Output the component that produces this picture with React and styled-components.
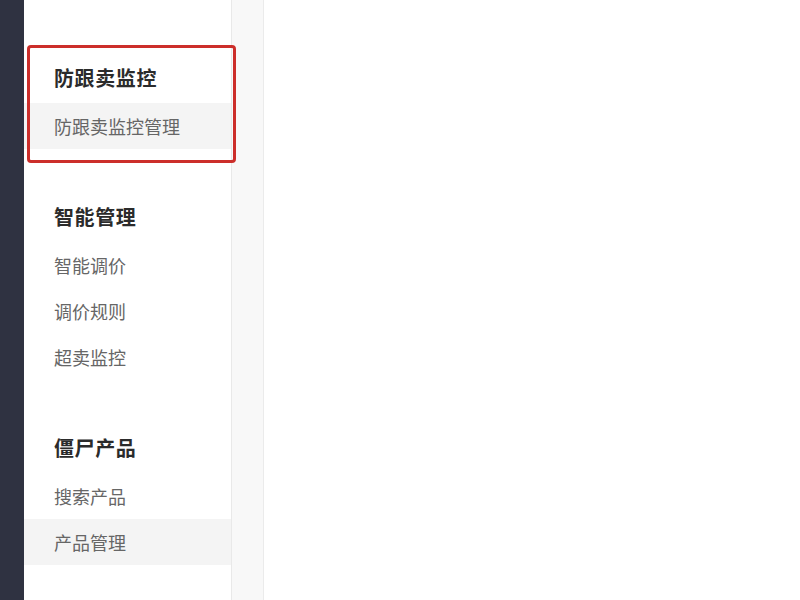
import React from 'react';
import styled, { createGlobalStyle } from 'styled-components';

const groups = [
    { title: '防跟卖监控', items: [{ text: '防跟卖监控管理', active: true }], marked: true },
    { title: '智能管理', items: [{ text: '智能调价' }, { text: '调价规则' }, { text: '超卖监控' }] },
    { title: '僵尸产品', items: [{ text: '搜索产品' }, { text: '产品管理', active: true }] },
];

export default function App() {
    return (
        <Page>
            <GlobalStyle />
            <Rail />
            <Sidebar>
                <PeekItem>跟卖商品</PeekItem>
                {groups.map(g => (
                    <Group key={g.title}>
                        <Title>{g.title}</Title>
                        {g.items.map(it => (
                            <Item key={it.text} active={it.active}>{it.text}</Item>
                        ))}
                        {g.marked && <Mark />}
                    </Group>
                ))}
            </Sidebar>
            <Gutter />
            <Main />
        </Page>
    );
}

const GlobalStyle = createGlobalStyle`
    html, body {
        margin: 0;
        padding: 0;
        background: #fff;
    }
    body {
        font-family: "Noto Sans CJK SC", "Noto Sans", sans-serif;
    }
`;

const Page = styled.div`
    display: flex;
    width: 800px;
    height: 600px;
    overflow: hidden;
`;

const Rail = styled.div`
    width: 24px;
    flex-shrink: 0;
    background-color: #2f3241;
`;

const Sidebar = styled.div`
    width: 207px;
    flex-shrink: 0;
    background-color: #fff;
    border-right: 1px solid #e9e9e9;
    display: flex;
    flex-direction: column;
`;

const Group = styled.div`
    position: relative;
    display: flex;
    flex-direction: column;
    & + & {
        margin-top: 43px;
    }
`;

const Title = styled.div`
    height: 50px;
    line-height: 50px;
    padding-left: 30px;
    font-size: 20px;
    font-weight: 700;
    color: #2b2b2b;
    letter-spacing: 0.6px;
`;

const Item = styled.div`
    height: 46px;
    line-height: 46px;
    padding-left: 30px;
    font-size: 18px;
    color: #666;
    background-color: ${p => (p.active ? '#f4f4f4' : 'transparent')};
`;

const PeekItem = styled(Item)`
    margin-top: -35px;
    margin-bottom: 42px;
    color: #b5b5b5;
`;

const Mark = styled.div`
    position: absolute;
    left: 3px;
    right: -5px;
    top: -8px;
    bottom: -14px;
    border: 3px solid #cc2e2a;
    border-radius: 4px;
    pointer-events: none;
`;

const Gutter = styled.div`
    width: 31px;
    flex-shrink: 0;
    background-color: #f8f8f8;
    border-right: 1px solid #ebebeb;
`;

const Main = styled.div`
    flex: 1;
    background-color: #fff;
`;
